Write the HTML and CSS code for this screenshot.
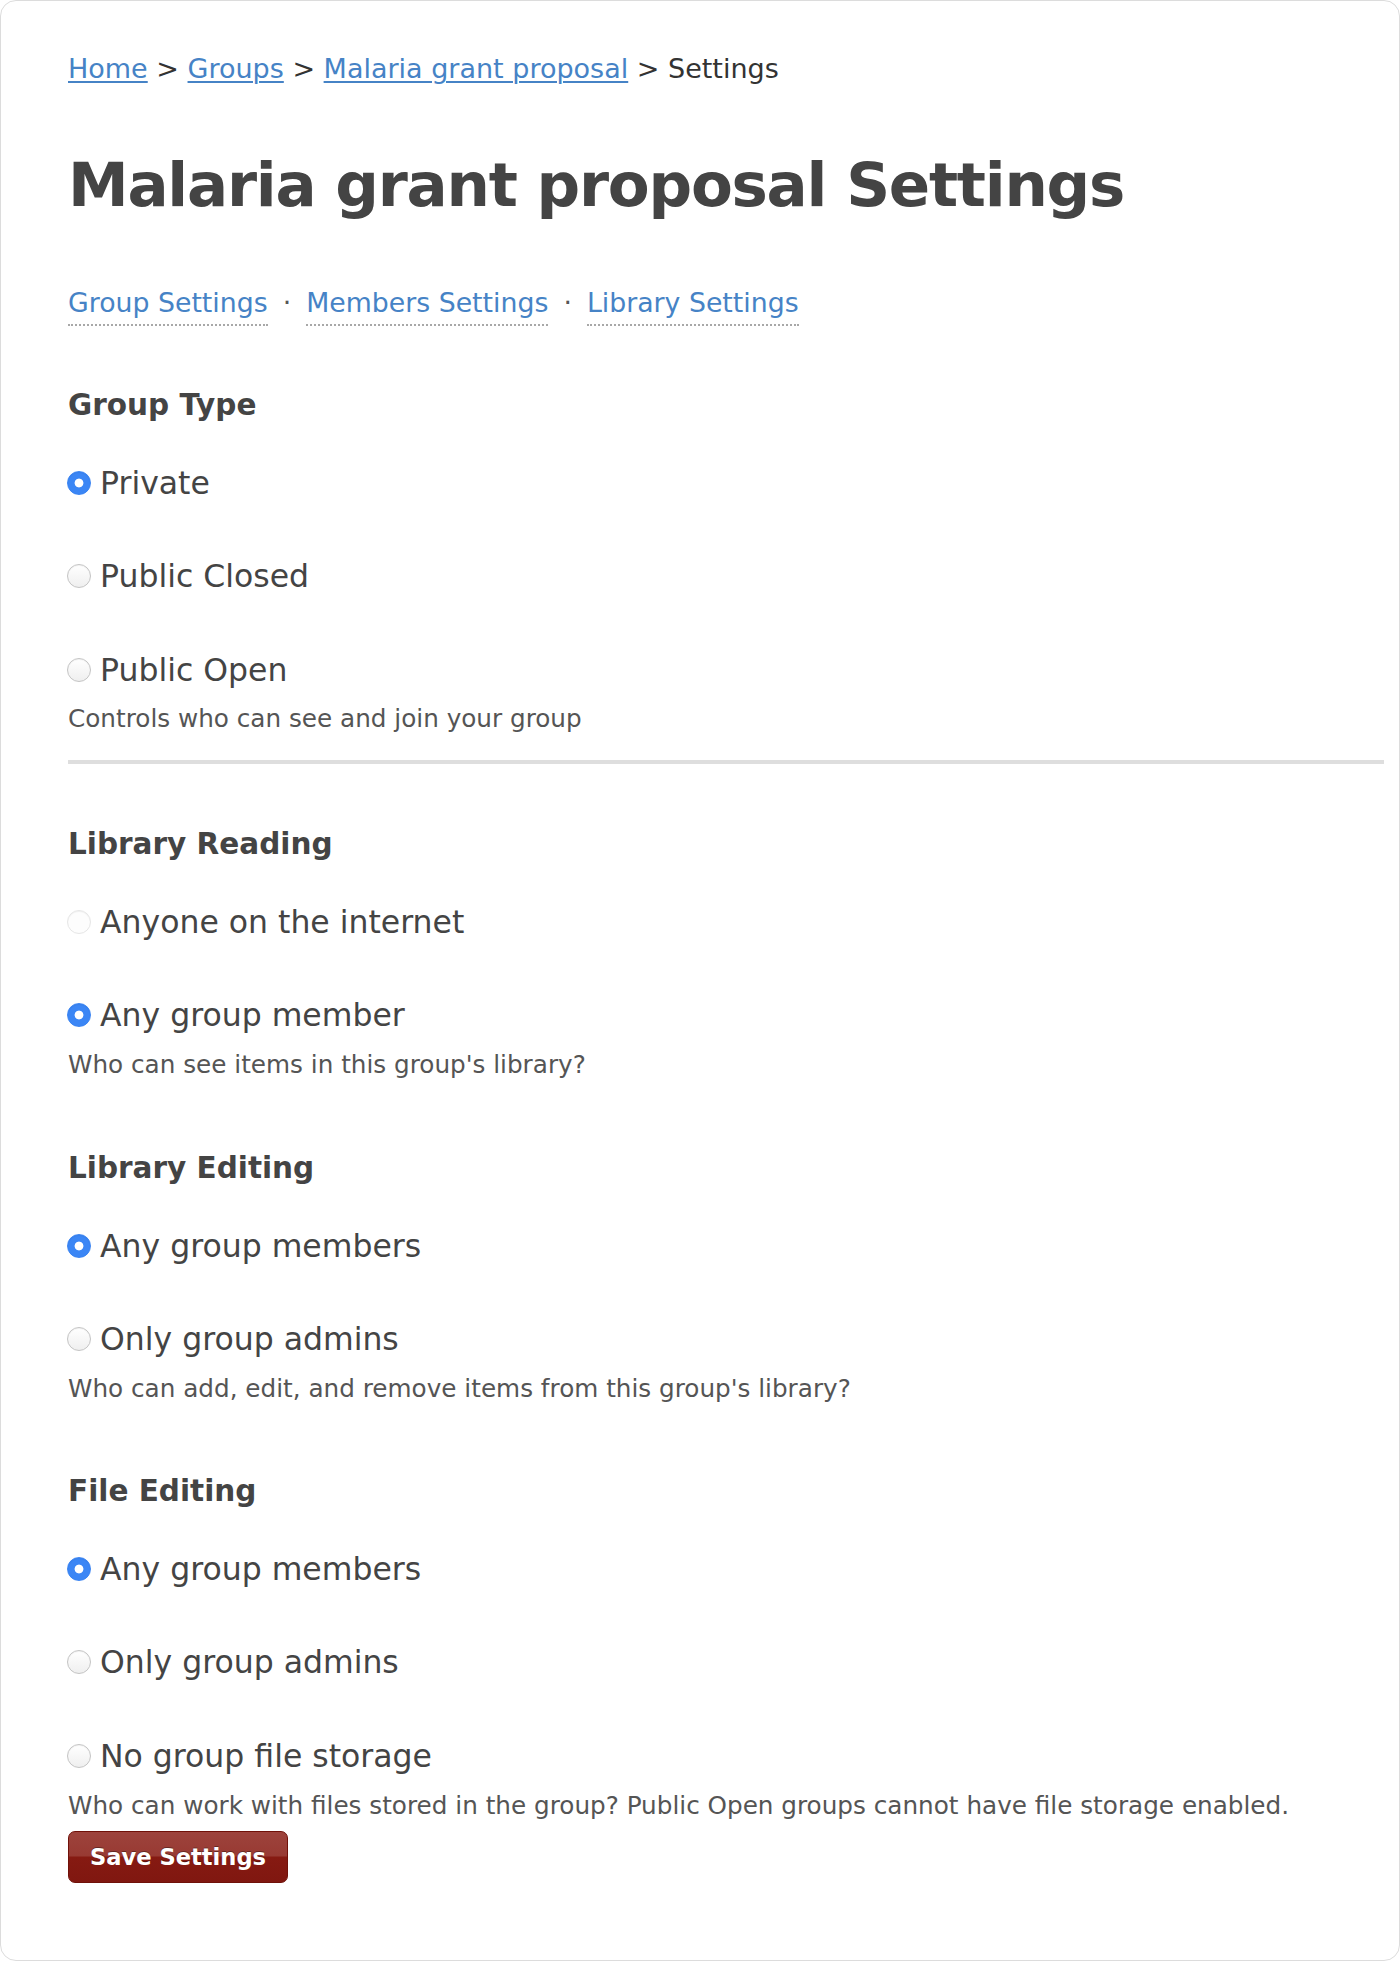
FILE: index.html
```html
<!DOCTYPE html>
<html lang="en">
<head>
<meta charset="utf-8">
<title>Malaria grant proposal Settings</title>
<link rel="stylesheet" href="styles.css">
</head>
<body>
<div class="card">
  <nav class="crumbs"><a href="#">Home</a> &gt; <a href="#">Groups</a> &gt; <a href="#">Malaria grant proposal</a> &gt; Settings</nav>
  <h1 class="title">Malaria grant proposal Settings</h1>
  <nav class="tabs">
    <a class="tab" href="#">Group Settings</a><span class="sep">·</span><a class="tab" href="#">Members Settings</a><span class="sep">·</span><a class="tab" href="#">Library Settings</a>
  </nav>
  <form class="settings">
    <section class="field">
      <h2 class="field-title">Group Type</h2>
      <label class="opt"><input class="radio" type="radio" name="type" checked>Private</label>
      <label class="opt"><input class="radio" type="radio" name="type">Public Closed</label>
      <label class="opt"><input class="radio" type="radio" name="type">Public Open</label>
      <p class="help">Controls who can see and join your group</p>
    </section>
    <hr class="divider">
    <section class="field first">
      <h2 class="field-title">Library Reading</h2>
      <label class="opt"><input class="radio faint" type="radio" name="read" disabled>Anyone on the internet</label>
      <label class="opt"><input class="radio" type="radio" name="read" checked>Any group member</label>
      <p class="help">Who can see items in this group's library?</p>
    </section>
    <section class="field">
      <h2 class="field-title">Library Editing</h2>
      <label class="opt"><input class="radio" type="radio" name="edit" checked>Any group members</label>
      <label class="opt"><input class="radio" type="radio" name="edit">Only group admins</label>
      <p class="help">Who can add, edit, and remove items from this group's library?</p>
    </section>
    <section class="field">
      <h2 class="field-title">File Editing</h2>
      <label class="opt"><input class="radio" type="radio" name="file" checked>Any group members</label>
      <label class="opt"><input class="radio" type="radio" name="file">Only group admins</label>
      <label class="opt"><input class="radio" type="radio" name="file">No group file storage</label>
      <p class="help">Who can work with files stored in the group? Public Open groups cannot have file storage enabled.</p>
    </section>
    <button class="save" type="button">Save Settings</button>
  </form>
</div>
</body>
</html>
```
FILE: styles.css
```css
html, body {
  margin: 0;
  padding: 0;
  background: #fff;
}
body {
  font-family: "DejaVu Sans", Verdana, sans-serif;
  color: #444;
}
.card {
  box-sizing: border-box;
  width: 1400px;
  height: 1961px;
  border: 1px solid #dcdcdc;
  border-radius: 16px;
  padding: 50px 15px 0 67px;
  display: flex;
  flex-direction: column;
  align-items: flex-start;
}
.crumbs {
  font-size: 27px;
  line-height: 36px;
  color: #333;
}
.crumbs a {
  color: #4683c6;
  text-decoration: underline;
  text-decoration-thickness: 2px;
  text-underline-offset: 3px;
}
.title {
  margin: 58px 0 0;
  font-size: 61px;
  line-height: 80px;
  font-weight: bold;
  letter-spacing: -1.25px;
  color: #444;
}
.tabs {
  margin-top: 60px;
  display: flex;
  align-items: flex-start;
  font-size: 26.75px;
  line-height: 36px;
}
.tab {
  display: block;
  color: #4683c6;
  text-decoration: none;
  padding-bottom: 3px;
  border-bottom: 2px dotted #a8a8a8;
}
.sep {
  margin: 0 15px;
  color: #555;
}
.settings {
  align-self: stretch;
  display: flex;
  flex-direction: column;
  align-items: flex-start;
}
.field {
  display: flex;
  flex-direction: column;
  align-items: flex-start;
  margin-top: 69.5px;
}
.field:first-child {
  margin-top: 61px;
}
.field.first {
  margin-top: 62px;
}
.field-title {
  margin: 0 0 42px;
  font-size: 29.5px;
  line-height: 36px;
  font-weight: bold;
  color: #444;
}
.opt {
  display: flex;
  align-items: center;
  font-size: 31.5px;
  line-height: 36px;
  color: #444;
}
.opt + .opt {
  margin-top: 57.3px;
}
.radio {
  appearance: none;
  -webkit-appearance: none;
  box-sizing: border-box;
  width: 24px;
  height: 24px;
  margin: 0 9px 0 -1px;
  border-radius: 50%;
  border: 1px solid #c4c4c4;
  background: linear-gradient(#ffffff, #efefef);
  box-shadow: inset 0 1px 1px rgba(0,0,0,0.05);
}
.radio:checked {
  border-color: #3a84f2;
  background: radial-gradient(circle, #ffffff 0 4px, #3b86f5 4.8px);
}
.radio.faint {
  border-color: #e6e6e6;
  background: #fdfdfd;
}
.help {
  margin: 16.75px 0 0;
  font-size: 24.7px;
  line-height: 30px;
  color: #555;
}
.divider {
  align-self: stretch;
  margin: 25.75px 0 0;
  height: 4px;
  border: 0;
  background: #dedede;
}
.save {
  margin-top: 10px;
  box-sizing: border-box;
  width: 220px;
  height: 52px;
  padding: 0;
  border: 1px solid #701109;
  border-radius: 7px;
  font-family: "DejaVu Sans", Verdana, sans-serif;
  font-size: 22.6px;
  font-weight: bold;
  color: #fff;
  text-shadow: 0 -1px 0 rgba(0,0,0,0.35);
  background: linear-gradient(to bottom, #9d433c 0%, #983a33 48%, #861a12 50%, #801710 100%);
}
```
